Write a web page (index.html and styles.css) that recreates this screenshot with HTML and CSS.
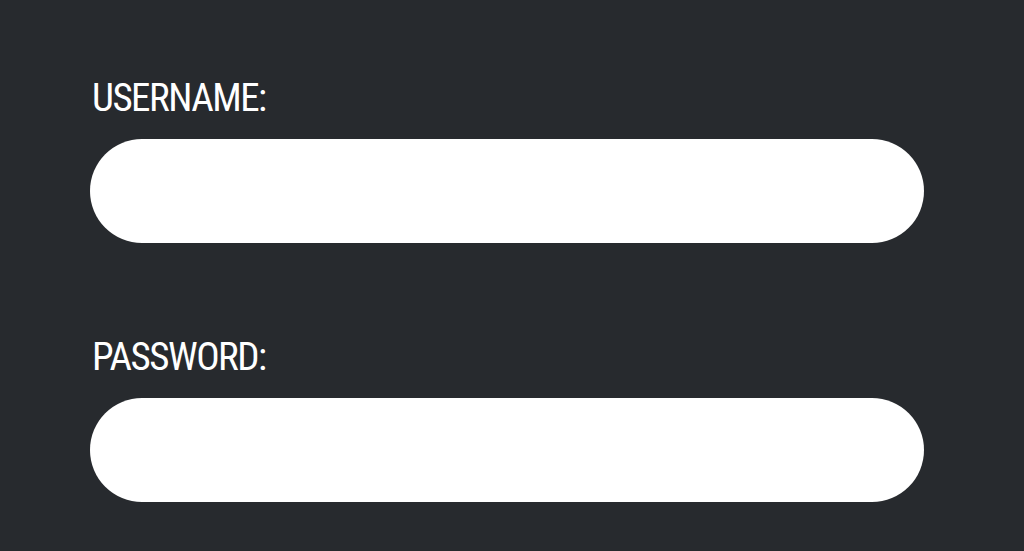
FILE: index.html
```html
<!DOCTYPE html>
<html>
<head>
<meta charset="utf-8">
<link rel="stylesheet" href="styles.css">
</head>
<body>
<form class="form">
  <div class="field">
    <label class="label" for="u">USERNAME:</label>
    <input class="input" id="u" type="text">
  </div>
  <div class="field">
    <label class="label" for="p">PASSWORD:</label>
    <input class="input" id="p" type="password">
  </div>
</form>
</body>
</html>
```
FILE: styles.css
```css
html, body {
  margin: 0;
  padding: 0;
  background: #272a2e;
  height: 100%;
  overflow: hidden;
}
.form {
  display: flex;
  flex-direction: column;
  gap: 95px;
  padding: 79px 100px 0 90px;
}
.field {
  display: flex;
  flex-direction: column;
  gap: 22px;
}
.label {
  font-family: "Roboto Condensed", "DejaVu Sans Condensed", "Liberation Sans Narrow", Roboto, sans-serif;
  font-stretch: condensed;
  font-size: 39px;
  font-weight: 400;
  letter-spacing: -1.5px;
  line-height: 38px;
  color: #ffffff;
  padding-left: 2px;
}
.input {
  box-sizing: border-box;
  width: 834px;
  height: 104px;
  border: none;
  border-radius: 52px;
  background: #ffffff;
  outline: none;
  padding: 0 40px;
  font-size: 24px;
}
```
